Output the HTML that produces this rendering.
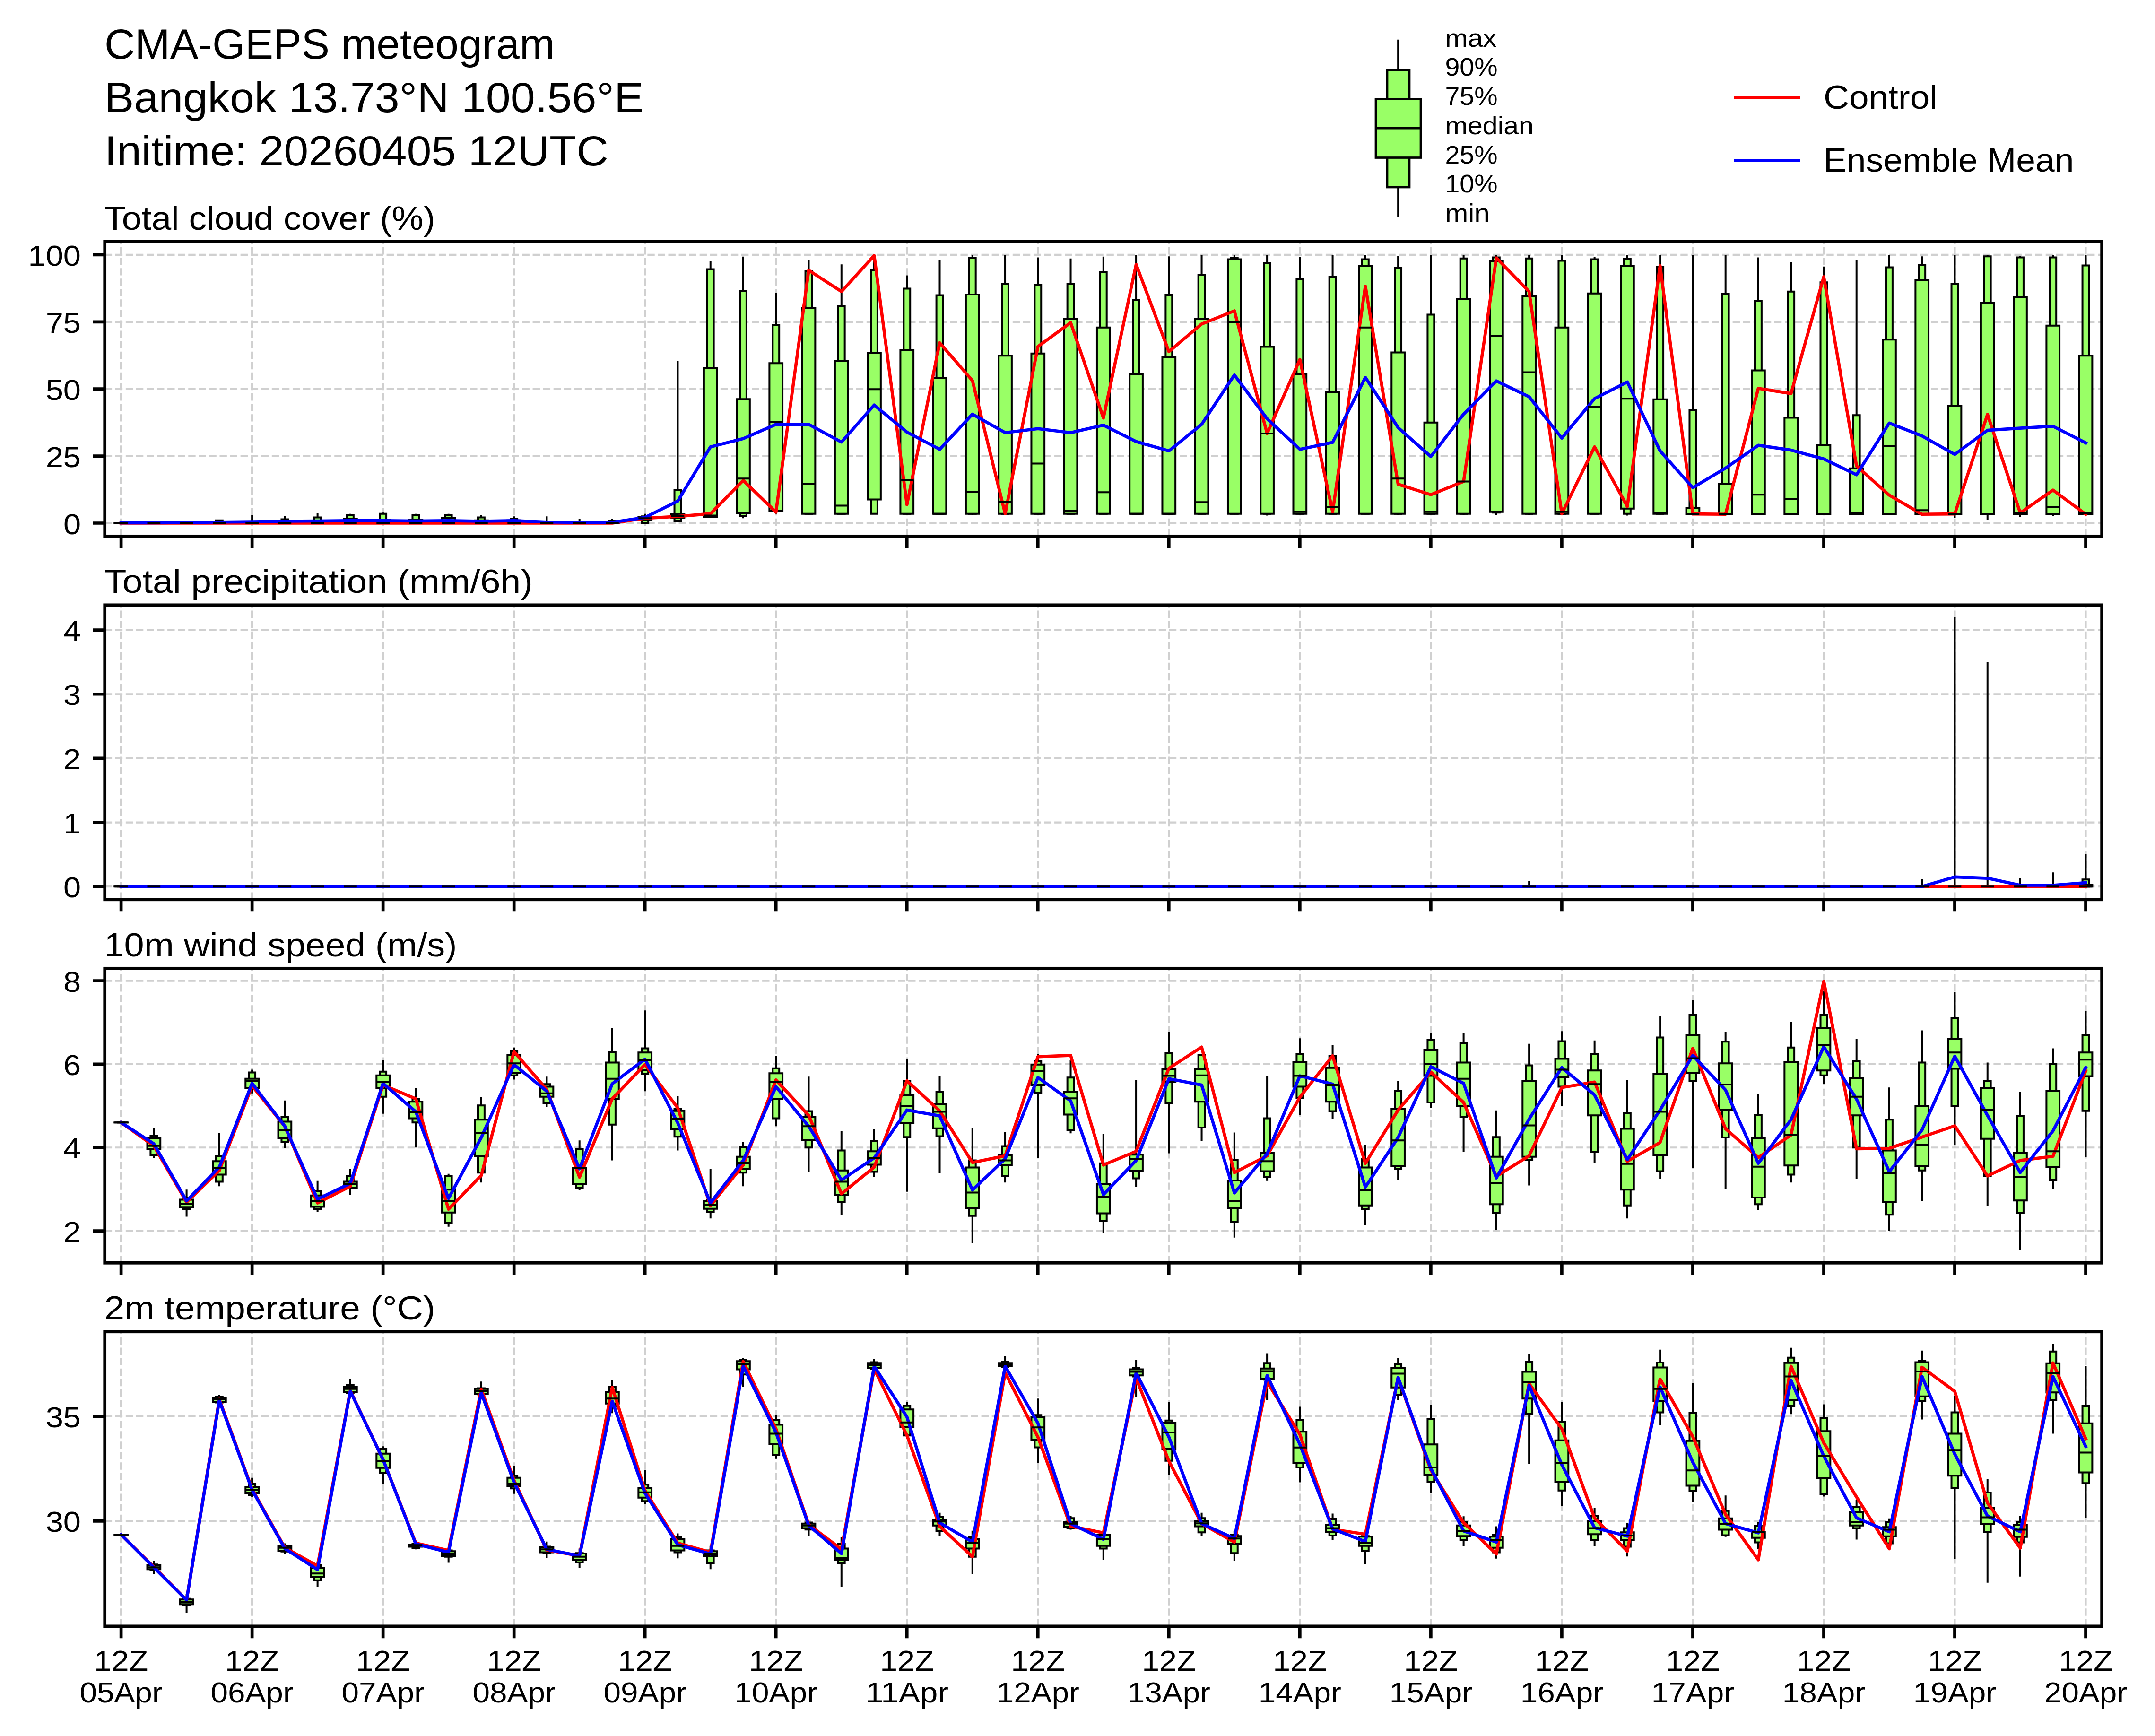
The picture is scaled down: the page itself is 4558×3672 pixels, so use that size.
<!DOCTYPE html><html><head><meta charset="utf-8"><title>CMA-GEPS meteogram</title><style>html,body{margin:0;padding:0;background:#fff;}svg{display:block;}</style></head><body>
<svg width="4558" height="3672" viewBox="0 0 4558 3672" font-family='"Liberation Sans", sans-serif' fill="#000">
<rect x="0" y="0" width="4558" height="3672" fill="#fff"/>
<text x="220.9" y="123.9" font-size="88.33" textLength="952.5" lengthAdjust="spacingAndGlyphs">CMA-GEPS meteogram</text>
<text x="220.9" y="236.7" font-size="88.33" textLength="1140.5" lengthAdjust="spacingAndGlyphs">Bangkok 13.73°N 100.56°E</text>
<text x="220.9" y="349.5" font-size="88.33" textLength="1065.8" lengthAdjust="spacingAndGlyphs">Initime: 20260405 12UTC</text>
<path d="M256.10 1134.30V511.30M533.13 1134.30V511.30M810.15 1134.30V511.30M1087.18 1134.30V511.30M1364.21 1134.30V511.30M1641.23 1134.30V511.30M1918.26 1134.30V511.30M2195.29 1134.30V511.30M2472.31 1134.30V511.30M2749.34 1134.30V511.30M3026.37 1134.30V511.30M3303.39 1134.30V511.30M3580.42 1134.30V511.30M3857.45 1134.30V511.30M4134.47 1134.30V511.30M4411.50 1134.30V511.30M221.70 1106.50H4445.60M221.70 964.60H4445.60M221.70 822.70H4445.60M221.70 680.80H4445.60M221.70 538.90H4445.60" stroke="#d0d0d0" stroke-width="4.17" stroke-dasharray="15.4 6.67" fill="none"/>
<path d="M463.87 1106.50V1099.12M533.13 1106.50V1088.90M602.38 1106.50V1091.17M671.64 1106.50V1085.50M740.90 1106.50V1086.63M810.15 1106.50V1084.36M879.41 1106.50V1086.63M948.67 1106.50V1086.63M1017.92 1106.50V1088.90M1087.18 1106.50V1092.31M1156.44 1106.50V1092.31M1225.69 1106.50V1097.42M1294.95 1106.50V1097.99M1364.21 1106.50V1086.63M1433.46 1104.80V763.67M1502.72 1094.58V551.95M1571.98 1096.28V542.87M1641.23 1086.63V620.07M1710.49 1088.34V549.68M1779.75 1088.34V559.33M1849.00 1087.77V538.90M1918.26 1088.34V582.61M1987.52 1088.34V550.82M2056.77 1089.47V538.90M2126.03 1088.34V538.90M2195.29 1088.34V544.58M2264.54 1088.34V546.85M2333.80 1088.34V542.87M2403.06 1088.34V538.90M2472.31 1088.34V542.31M2541.57 1088.34V538.90M2610.83 1088.34V538.90M2680.08 1090.61V538.90M2749.34 1088.34V543.44M2818.60 1088.34V540.04M2887.85 1088.34V538.90M2957.11 1089.47V541.74M3026.37 1088.34V538.90M3095.62 1089.47V538.90M3164.88 1089.47V538.90M3234.14 1089.47V539.47M3303.39 1088.34V538.90M3372.65 1088.34V543.44M3441.91 1090.61V538.90M3511.16 1088.34V538.90M3580.42 1087.77V538.90M3649.68 1087.77V540.04M3718.93 1087.77V544.58M3788.19 1089.47V554.23M3857.45 1087.77V563.87M3926.70 1087.77V550.82M3995.96 1087.77V538.90M4065.22 1087.77V542.31M4134.47 1095.72V538.90M4203.73 1099.12V538.90M4272.99 1093.45V541.17M4342.24 1091.17V538.90M4411.50 1087.77V538.90" stroke="#000" stroke-width="4.0" fill="none"/>
<g fill="#99ff66" stroke="#000" stroke-width="4.0" stroke-linejoin="miter"><path d="M249.17 1106.50h13.85" stroke-linecap="square"/><path d="M242.25 1106.50h27.70" stroke-linecap="square"/><path d="M318.43 1106.50h13.85" stroke-linecap="square"/><path d="M311.51 1106.50h27.70" stroke-linecap="square"/><path d="M387.69 1106.50h13.85" stroke-linecap="square"/><path d="M380.76 1106.50h27.70" stroke-linecap="square"/><path d="M456.94 1100.82h13.85v5.68h-13.85Z"/><path d="M450.02 1105.36h27.70v1.14h-27.70Z"/><path d="M526.20 1103.66h13.85v2.84h-13.85Z"/><path d="M519.28 1105.36h27.70v1.14h-27.70Z"/><path d="M595.46 1098.55h13.85v7.95h-13.85Z"/><path d="M588.53 1104.80h27.70v1.70h-27.70Z"/><path d="M664.71 1094.58h13.85v11.92h-13.85Z"/><path d="M657.79 1104.80h27.70v1.70h-27.70Z"/><path d="M733.97 1088.90h13.85v17.60h-13.85Z"/><path d="M727.05 1097.99h27.70v8.51h-27.70Z"/><path d="M803.23 1086.63h13.85v19.87h-13.85Z"/><path d="M796.30 1099.69h27.70v6.81h-27.70Z"/><path d="M872.48 1088.90h13.85v17.60h-13.85Z"/><path d="M865.56 1099.69h27.70v6.81h-27.70Z"/><path d="M941.74 1088.90h13.85v17.60h-13.85Z"/><path d="M934.82 1095.72h27.70v10.78h-27.70Z"/><path d="M1011.00 1094.58h13.85v11.92h-13.85Z"/><path d="M1004.07 1100.82h27.70v5.68h-27.70Z"/><path d="M1080.25 1097.42h13.85v9.08h-13.85Z"/><path d="M1073.33 1100.82h27.70v5.68h-27.70Z"/><path d="M1149.51 1103.66h13.85v2.84h-13.85Z"/><path d="M1142.59 1104.80h27.70v1.70h-27.70Z"/><path d="M1218.77 1105.36h13.85v1.14h-13.85Z"/><path d="M1211.84 1106.50h27.70" stroke-linecap="square"/><path d="M1288.02 1101.96h13.85v4.54h-13.85Z"/><path d="M1281.10 1104.80h27.70v1.70h-27.70Z"/><path d="M1357.28 1092.31h13.85v14.19h-13.85Z"/><path d="M1350.36 1094.01h27.70v6.24h-27.70Z"/><path d="M1426.54 1036.12h13.85v65.84h-13.85Z"/><path d="M1419.61 1087.77h27.70v7.95h-27.70Z"/><path d="M1495.79 569.55h13.85v523.89h-13.85Z"/><path d="M1488.87 778.99h27.70v314.45h-27.70Z"/><path d="M1565.05 615.53h13.85v476.22h-13.85Z"/><path d="M1558.13 844.27h27.70v240.66h-27.70Z"/><path d="M1634.31 687.04h13.85v393.91h-13.85Z"/><path d="M1627.38 768.21h27.70v312.75h-27.70Z"/><path d="M1703.56 572.96h13.85v513.68h-13.85Z"/><path d="M1696.64 651.85h27.70v434.78h-27.70Z"/><path d="M1772.82 647.31h13.85v439.32h-13.85Z"/><path d="M1765.90 763.67h27.70v322.96h-27.70Z"/><path d="M1842.08 571.25h13.85v515.38h-13.85Z"/><path d="M1835.15 746.64h27.70v309.91h-27.70Z"/><path d="M1911.33 610.42h13.85v476.22h-13.85Z"/><path d="M1904.41 740.97h27.70v345.67h-27.70Z"/><path d="M1980.59 624.61h13.85v462.03h-13.85Z"/><path d="M1973.67 800.00h27.70v286.64h-27.70Z"/><path d="M2049.85 545.71h13.85v540.92h-13.85Z"/><path d="M2042.92 622.90h27.70v463.73h-27.70Z"/><path d="M2119.10 600.77h13.85v485.87h-13.85Z"/><path d="M2112.18 752.32h27.70v334.32h-27.70Z"/><path d="M2188.36 603.04h13.85v483.60h-13.85Z"/><path d="M2181.44 747.78h27.70v338.86h-27.70Z"/><path d="M2257.62 600.77h13.85v485.87h-13.85Z"/><path d="M2250.69 675.12h27.70v411.51h-27.70Z"/><path d="M2326.87 575.79h13.85v510.84h-13.85Z"/><path d="M2319.95 692.72h27.70v393.91h-27.70Z"/><path d="M2396.13 634.26h13.85v452.38h-13.85Z"/><path d="M2389.21 792.05h27.70v294.58h-27.70Z"/><path d="M2465.39 624.04h13.85v462.59h-13.85Z"/><path d="M2458.46 755.72h27.70v330.91h-27.70Z"/><path d="M2534.64 582.04h13.85v504.60h-13.85Z"/><path d="M2527.72 673.99h27.70v412.65h-27.70Z"/><path d="M2603.90 545.71h13.85v540.92h-13.85Z"/><path d="M2596.98 548.55h27.70v538.08h-27.70Z"/><path d="M2673.16 556.50h13.85v530.14h-13.85Z"/><path d="M2666.23 733.59h27.70v353.05h-27.70Z"/><path d="M2742.41 590.55h13.85v496.08h-13.85Z"/><path d="M2735.49 792.05h27.70v294.58h-27.70Z"/><path d="M2811.67 585.44h13.85v501.19h-13.85Z"/><path d="M2804.75 829.51h27.70v257.12h-27.70Z"/><path d="M2880.93 548.55h13.85v538.08h-13.85Z"/><path d="M2874.00 562.17h27.70v524.46h-27.70Z"/><path d="M2950.18 566.71h13.85v519.92h-13.85Z"/><path d="M2943.26 745.51h27.70v341.13h-27.70Z"/><path d="M3019.44 665.47h13.85v421.16h-13.85Z"/><path d="M3012.52 893.65h27.70v192.98h-27.70Z"/><path d="M3088.70 546.85h13.85v539.79h-13.85Z"/><path d="M3081.77 632.55h27.70v454.08h-27.70Z"/><path d="M3157.95 544.58h13.85v539.79h-13.85Z"/><path d="M3151.03 552.52h27.70v530.14h-27.70Z"/><path d="M3227.21 546.85h13.85v539.79h-13.85Z"/><path d="M3220.29 626.88h27.70v459.76h-27.70Z"/><path d="M3296.47 551.39h13.85v535.25h-13.85Z"/><path d="M3289.54 692.72h27.70v393.91h-27.70Z"/><path d="M3365.72 548.55h13.85v538.08h-13.85Z"/><path d="M3358.80 620.63h27.70v466.00h-27.70Z"/><path d="M3434.98 547.41h13.85v539.22h-13.85Z"/><path d="M3428.06 562.17h27.70v513.68h-27.70Z"/><path d="M3504.24 564.44h13.85v522.19h-13.85Z"/><path d="M3497.31 844.84h27.70v241.80h-27.70Z"/><path d="M3573.49 867.54h13.85v219.66h-13.85Z"/><path d="M3566.57 1074.15h27.70v13.05h-27.70Z"/><path d="M3642.75 621.77h13.85v465.43h-13.85Z"/><path d="M3635.83 1023.06h27.70v64.14h-27.70Z"/><path d="M3712.01 637.09h13.85v450.11h-13.85Z"/><path d="M3705.08 783.54h27.70v303.67h-27.70Z"/><path d="M3781.26 616.66h13.85v470.54h-13.85Z"/><path d="M3774.34 883.43h27.70v203.77h-27.70Z"/><path d="M3850.52 597.36h13.85v489.84h-13.85Z"/><path d="M3843.60 941.90h27.70v145.31h-27.70Z"/><path d="M3919.78 878.32h13.85v208.88h-13.85Z"/><path d="M3912.85 990.71h27.70v96.49h-27.70Z"/><path d="M3989.03 565.58h13.85v521.62h-13.85Z"/><path d="M3982.11 718.26h27.70v368.94h-27.70Z"/><path d="M4058.29 559.90h13.85v527.30h-13.85Z"/><path d="M4051.37 592.82h27.70v494.38h-27.70Z"/><path d="M4127.55 600.20h13.85v487.57h-13.85Z"/><path d="M4120.62 859.03h27.70v228.74h-27.70Z"/><path d="M4196.80 542.31h13.85v544.90h-13.85Z"/><path d="M4189.88 641.07h27.70v446.13h-27.70Z"/><path d="M4266.06 544.58h13.85v542.63h-13.85Z"/><path d="M4259.14 628.01h27.70v459.19h-27.70Z"/><path d="M4335.32 544.58h13.85v542.63h-13.85Z"/><path d="M4328.39 688.75h27.70v398.46h-27.70Z"/><path d="M4404.57 561.60h13.85v525.60h-13.85Z"/><path d="M4397.65 752.32h27.70v334.88h-27.70Z"/></g>
<polyline points="256.10,1106.50 325.36,1106.50 394.61,1106.50 463.87,1106.50 533.13,1106.50 602.38,1106.50 671.64,1106.50 740.90,1106.50 810.15,1106.50 879.41,1106.50 948.67,1106.50 1017.92,1106.50 1087.18,1106.50 1156.44,1106.50 1225.69,1106.50 1294.95,1106.50 1364.21,1096.28 1433.46,1092.31 1502.72,1086.63 1571.98,1016.25 1641.23,1083.23 1710.49,571.82 1779.75,616.66 1849.00,540.60 1918.26,1067.34 1987.52,725.07 2056.77,805.10 2126.03,1086.63 2195.29,733.02 2264.54,682.50 2333.80,884.00 2403.06,559.33 2472.31,743.80 2541.57,685.34 2610.83,657.53 2680.08,916.92 2749.34,760.26 2818.60,1082.66 2887.85,605.31 2957.11,1024.20 3026.37,1046.33 3095.62,1018.52 3164.88,545.71 3234.14,616.66 3303.39,1086.63 3372.65,945.30 3441.91,1071.31 3511.16,562.17 3580.42,1087.20 3649.68,1087.77 3718.93,821.56 3788.19,832.35 3857.45,585.44 3926.70,985.60 3995.96,1047.47 4065.22,1087.77 4134.47,1087.20 4203.73,876.62 4272.99,1084.93 4342.24,1036.69 4411.50,1087.77" fill="none" stroke="#ff0000" stroke-width="6.67" stroke-linejoin="round" stroke-linecap="square"/>
<polyline points="256.10,1105.93 325.36,1105.93 394.61,1105.36 463.87,1104.23 533.13,1103.66 602.38,1102.53 671.64,1101.96 740.90,1101.39 810.15,1101.39 879.41,1101.96 948.67,1101.39 1017.92,1102.53 1087.18,1101.39 1156.44,1104.23 1225.69,1104.80 1294.95,1104.80 1364.21,1094.58 1433.46,1059.96 1502.72,945.30 1571.98,927.71 1641.23,897.62 1710.49,897.62 1779.75,935.08 1849.00,856.76 1918.26,914.08 1987.52,950.41 2056.77,876.05 2126.03,915.22 2195.29,906.70 2264.54,915.22 2333.80,899.33 2403.06,933.95 2472.31,953.82 2541.57,897.62 2610.83,793.18 2680.08,885.70 2749.34,950.41 2818.60,935.65 2887.85,798.29 2957.11,904.43 3026.37,965.74 3095.62,876.05 3164.88,805.67 3234.14,839.16 3303.39,926.57 3372.65,843.13 3441.91,807.94 3511.16,953.82 3580.42,1031.58 3649.68,990.14 3718.93,941.90 3788.19,952.11 3857.45,970.84 3926.70,1004.33 3995.96,894.79 4065.22,922.03 4134.47,961.19 4203.73,910.11 4272.99,905.57 4342.24,901.60 4411.50,936.79" fill="none" stroke="#0000ff" stroke-width="6.67" stroke-linejoin="round" stroke-linecap="square"/>
<path d="M242.25 1106.50H269.95M311.51 1106.50H339.21M380.76 1106.50H408.46M450.02 1106.50H477.72M519.28 1106.50H546.98M588.53 1106.50H616.23M657.79 1106.50H685.49M727.05 1106.50H754.75M796.30 1106.50H824.00M865.56 1106.50H893.26M934.82 1106.50H962.52M1004.07 1106.50H1031.77M1073.33 1106.50H1101.03M1142.59 1106.50H1170.29M1211.84 1106.50H1239.54M1281.10 1106.50H1308.80M1350.36 1096.28H1378.06M1419.61 1091.74H1447.31M1488.87 1090.61H1516.57M1558.13 1012.28H1585.83M1627.38 893.08H1655.08M1696.64 1023.63H1724.34M1765.90 1069.61H1793.60M1835.15 823.27H1862.85M1904.41 1015.68H1932.11M1973.67 1086.63H2001.37M2042.92 1040.09H2070.62M2112.18 1061.09H2139.88M2181.44 980.49H2209.14M2250.69 1080.96H2278.39M2319.95 1041.23H2347.65M2389.21 1086.63H2416.91M2458.46 1086.63H2486.16M2527.72 1062.23H2555.42M2596.98 681.37H2624.68M2666.23 916.92H2693.93M2735.49 1082.66H2763.19M2804.75 1071.88H2832.45M2874.00 692.72H2901.70M2943.26 1012.28H2970.96M3012.52 1082.66H3040.22M3081.77 1018.52H3109.47M3151.03 710.32H3178.73M3220.29 787.51H3247.99M3289.54 1082.66H3317.24M3358.80 860.73H3386.50M3428.06 843.13H3455.76M3497.31 1084.93H3525.01M3566.57 1087.20H3594.27M3635.83 1087.20H3663.53M3705.08 1046.33H3732.78M3774.34 1055.98H3802.04M3843.60 1087.20H3871.30M3912.85 1086.07H3940.55M3982.11 943.60H4009.81M4051.37 1079.26H4079.07M4120.62 1087.77H4148.32M4189.88 1087.20H4217.58M4259.14 1084.93H4286.84M4328.39 1071.88H4356.09M4397.65 1086.07H4425.35" stroke="#000" stroke-width="4.0" fill="none"/>
<rect x="221.70" y="511.30" width="4223.90" height="623.00" fill="none" stroke="#000" stroke-width="6.67" stroke-linejoin="miter"/>
<path d="M221.70 1106.50H196.20M221.70 964.60H196.20M221.70 822.70H196.20M221.70 680.80H196.20M221.70 538.90H196.20M256.10 1134.30V1159.80M533.13 1134.30V1159.80M810.15 1134.30V1159.80M1087.18 1134.30V1159.80M1364.21 1134.30V1159.80M1641.23 1134.30V1159.80M1918.26 1134.30V1159.80M2195.29 1134.30V1159.80M2472.31 1134.30V1159.80M2749.34 1134.30V1159.80M3026.37 1134.30V1159.80M3303.39 1134.30V1159.80M3580.42 1134.30V1159.80M3857.45 1134.30V1159.80M4134.47 1134.30V1159.80M4411.50 1134.30V1159.80" stroke="#000" stroke-width="6.67" fill="none"/>
<text x="171.0" y="1129.5" font-size="61.83" text-anchor="end" textLength="37.1" lengthAdjust="spacingAndGlyphs">0</text>
<text x="171.0" y="987.6" font-size="61.83" text-anchor="end" textLength="74.3" lengthAdjust="spacingAndGlyphs">25</text>
<text x="171.0" y="845.7" font-size="61.83" text-anchor="end" textLength="74.3" lengthAdjust="spacingAndGlyphs">50</text>
<text x="171.0" y="703.8" font-size="61.83" text-anchor="end" textLength="74.3" lengthAdjust="spacingAndGlyphs">75</text>
<text x="171.0" y="561.9" font-size="61.83" text-anchor="end" textLength="111.4" lengthAdjust="spacingAndGlyphs">100</text>
<text x="220.4" y="485.7" font-size="70.67" textLength="700.0" lengthAdjust="spacingAndGlyphs">Total cloud cover (%)</text>
<path d="M256.10 1902.80V1279.80M533.13 1902.80V1279.80M810.15 1902.80V1279.80M1087.18 1902.80V1279.80M1364.21 1902.80V1279.80M1641.23 1902.80V1279.80M1918.26 1902.80V1279.80M2195.29 1902.80V1279.80M2472.31 1902.80V1279.80M2749.34 1902.80V1279.80M3026.37 1902.80V1279.80M3303.39 1902.80V1279.80M3580.42 1902.80V1279.80M3857.45 1902.80V1279.80M4134.47 1902.80V1279.80M4411.50 1902.80V1279.80M221.70 1875.20H4445.60M221.70 1739.55H4445.60M221.70 1603.90H4445.60M221.70 1468.25H4445.60M221.70 1332.60H4445.60" stroke="#d0d0d0" stroke-width="4.17" stroke-dasharray="15.4 6.67" fill="none"/>
<path d="M3234.14 1875.20V1863.53M4065.22 1875.20V1859.46M4134.47 1875.20V1305.47M4203.73 1875.20V1400.42M4272.99 1875.20V1857.57M4342.24 1875.20V1845.36M4411.50 1875.20V1806.02" stroke="#000" stroke-width="4.0" fill="none"/>
<g fill="#99ff66" stroke="#000" stroke-width="4.0" stroke-linejoin="miter"><path d="M249.17 1875.20h13.85" stroke-linecap="square"/><path d="M242.25 1875.20h27.70" stroke-linecap="square"/><path d="M318.43 1875.20h13.85" stroke-linecap="square"/><path d="M311.51 1875.20h27.70" stroke-linecap="square"/><path d="M387.69 1875.20h13.85" stroke-linecap="square"/><path d="M380.76 1875.20h27.70" stroke-linecap="square"/><path d="M456.94 1875.20h13.85" stroke-linecap="square"/><path d="M450.02 1875.20h27.70" stroke-linecap="square"/><path d="M526.20 1875.20h13.85" stroke-linecap="square"/><path d="M519.28 1875.20h27.70" stroke-linecap="square"/><path d="M595.46 1875.20h13.85" stroke-linecap="square"/><path d="M588.53 1875.20h27.70" stroke-linecap="square"/><path d="M664.71 1875.20h13.85" stroke-linecap="square"/><path d="M657.79 1875.20h27.70" stroke-linecap="square"/><path d="M733.97 1875.20h13.85" stroke-linecap="square"/><path d="M727.05 1875.20h27.70" stroke-linecap="square"/><path d="M803.23 1875.20h13.85" stroke-linecap="square"/><path d="M796.30 1875.20h27.70" stroke-linecap="square"/><path d="M872.48 1875.20h13.85" stroke-linecap="square"/><path d="M865.56 1875.20h27.70" stroke-linecap="square"/><path d="M941.74 1875.20h13.85" stroke-linecap="square"/><path d="M934.82 1875.20h27.70" stroke-linecap="square"/><path d="M1011.00 1875.20h13.85" stroke-linecap="square"/><path d="M1004.07 1875.20h27.70" stroke-linecap="square"/><path d="M1080.25 1875.20h13.85" stroke-linecap="square"/><path d="M1073.33 1875.20h27.70" stroke-linecap="square"/><path d="M1149.51 1875.20h13.85" stroke-linecap="square"/><path d="M1142.59 1875.20h27.70" stroke-linecap="square"/><path d="M1218.77 1875.20h13.85" stroke-linecap="square"/><path d="M1211.84 1875.20h27.70" stroke-linecap="square"/><path d="M1288.02 1875.20h13.85" stroke-linecap="square"/><path d="M1281.10 1875.20h27.70" stroke-linecap="square"/><path d="M1357.28 1875.20h13.85" stroke-linecap="square"/><path d="M1350.36 1875.20h27.70" stroke-linecap="square"/><path d="M1426.54 1875.20h13.85" stroke-linecap="square"/><path d="M1419.61 1875.20h27.70" stroke-linecap="square"/><path d="M1495.79 1875.20h13.85" stroke-linecap="square"/><path d="M1488.87 1875.20h27.70" stroke-linecap="square"/><path d="M1565.05 1875.20h13.85" stroke-linecap="square"/><path d="M1558.13 1875.20h27.70" stroke-linecap="square"/><path d="M1634.31 1875.20h13.85" stroke-linecap="square"/><path d="M1627.38 1875.20h27.70" stroke-linecap="square"/><path d="M1703.56 1875.20h13.85" stroke-linecap="square"/><path d="M1696.64 1875.20h27.70" stroke-linecap="square"/><path d="M1772.82 1875.20h13.85" stroke-linecap="square"/><path d="M1765.90 1875.20h27.70" stroke-linecap="square"/><path d="M1842.08 1875.20h13.85" stroke-linecap="square"/><path d="M1835.15 1875.20h27.70" stroke-linecap="square"/><path d="M1911.33 1875.20h13.85" stroke-linecap="square"/><path d="M1904.41 1875.20h27.70" stroke-linecap="square"/><path d="M1980.59 1875.20h13.85" stroke-linecap="square"/><path d="M1973.67 1875.20h27.70" stroke-linecap="square"/><path d="M2049.85 1875.20h13.85" stroke-linecap="square"/><path d="M2042.92 1875.20h27.70" stroke-linecap="square"/><path d="M2119.10 1875.20h13.85" stroke-linecap="square"/><path d="M2112.18 1875.20h27.70" stroke-linecap="square"/><path d="M2188.36 1875.20h13.85" stroke-linecap="square"/><path d="M2181.44 1875.20h27.70" stroke-linecap="square"/><path d="M2257.62 1875.20h13.85" stroke-linecap="square"/><path d="M2250.69 1875.20h27.70" stroke-linecap="square"/><path d="M2326.87 1875.20h13.85" stroke-linecap="square"/><path d="M2319.95 1875.20h27.70" stroke-linecap="square"/><path d="M2396.13 1875.20h13.85" stroke-linecap="square"/><path d="M2389.21 1875.20h27.70" stroke-linecap="square"/><path d="M2465.39 1875.20h13.85" stroke-linecap="square"/><path d="M2458.46 1875.20h27.70" stroke-linecap="square"/><path d="M2534.64 1875.20h13.85" stroke-linecap="square"/><path d="M2527.72 1875.20h27.70" stroke-linecap="square"/><path d="M2603.90 1875.20h13.85" stroke-linecap="square"/><path d="M2596.98 1875.20h27.70" stroke-linecap="square"/><path d="M2673.16 1875.20h13.85" stroke-linecap="square"/><path d="M2666.23 1875.20h27.70" stroke-linecap="square"/><path d="M2742.41 1875.20h13.85" stroke-linecap="square"/><path d="M2735.49 1875.20h27.70" stroke-linecap="square"/><path d="M2811.67 1875.20h13.85" stroke-linecap="square"/><path d="M2804.75 1875.20h27.70" stroke-linecap="square"/><path d="M2880.93 1875.20h13.85" stroke-linecap="square"/><path d="M2874.00 1875.20h27.70" stroke-linecap="square"/><path d="M2950.18 1875.20h13.85" stroke-linecap="square"/><path d="M2943.26 1875.20h27.70" stroke-linecap="square"/><path d="M3019.44 1875.20h13.85" stroke-linecap="square"/><path d="M3012.52 1875.20h27.70" stroke-linecap="square"/><path d="M3088.70 1875.20h13.85" stroke-linecap="square"/><path d="M3081.77 1875.20h27.70" stroke-linecap="square"/><path d="M3157.95 1875.20h13.85" stroke-linecap="square"/><path d="M3151.03 1875.20h27.70" stroke-linecap="square"/><path d="M3227.21 1875.20h13.85" stroke-linecap="square"/><path d="M3220.29 1875.20h27.70" stroke-linecap="square"/><path d="M3296.47 1875.20h13.85" stroke-linecap="square"/><path d="M3289.54 1875.20h27.70" stroke-linecap="square"/><path d="M3365.72 1875.20h13.85" stroke-linecap="square"/><path d="M3358.80 1875.20h27.70" stroke-linecap="square"/><path d="M3434.98 1875.20h13.85" stroke-linecap="square"/><path d="M3428.06 1875.20h27.70" stroke-linecap="square"/><path d="M3504.24 1875.20h13.85" stroke-linecap="square"/><path d="M3497.31 1875.20h27.70" stroke-linecap="square"/><path d="M3573.49 1875.20h13.85" stroke-linecap="square"/><path d="M3566.57 1875.20h27.70" stroke-linecap="square"/><path d="M3642.75 1875.20h13.85" stroke-linecap="square"/><path d="M3635.83 1875.20h27.70" stroke-linecap="square"/><path d="M3712.01 1875.20h13.85" stroke-linecap="square"/><path d="M3705.08 1875.20h27.70" stroke-linecap="square"/><path d="M3781.26 1875.20h13.85" stroke-linecap="square"/><path d="M3774.34 1875.20h27.70" stroke-linecap="square"/><path d="M3850.52 1875.20h13.85" stroke-linecap="square"/><path d="M3843.60 1875.20h27.70" stroke-linecap="square"/><path d="M3919.78 1875.20h13.85" stroke-linecap="square"/><path d="M3912.85 1875.20h27.70" stroke-linecap="square"/><path d="M3989.03 1875.20h13.85" stroke-linecap="square"/><path d="M3982.11 1875.20h27.70" stroke-linecap="square"/><path d="M4058.29 1875.20h13.85" stroke-linecap="square"/><path d="M4051.37 1875.20h27.70" stroke-linecap="square"/><path d="M4127.55 1875.20h13.85" stroke-linecap="square"/><path d="M4120.62 1875.20h27.70" stroke-linecap="square"/><path d="M4196.80 1875.20h13.85" stroke-linecap="square"/><path d="M4189.88 1875.20h27.70" stroke-linecap="square"/><path d="M4266.06 1875.20h13.85" stroke-linecap="square"/><path d="M4259.14 1875.20h27.70" stroke-linecap="square"/><path d="M4335.32 1875.20h13.85" stroke-linecap="square"/><path d="M4328.39 1875.20h27.70" stroke-linecap="square"/><path d="M4404.57 1860.28h13.85v14.92h-13.85Z"/><path d="M4397.65 1871.13h27.70v4.07h-27.70Z"/></g>
<polyline points="256.10,1875.20 325.36,1875.20 394.61,1875.20 463.87,1875.20 533.13,1875.20 602.38,1875.20 671.64,1875.20 740.90,1875.20 810.15,1875.20 879.41,1875.20 948.67,1875.20 1017.92,1875.20 1087.18,1875.20 1156.44,1875.20 1225.69,1875.20 1294.95,1875.20 1364.21,1875.20 1433.46,1875.20 1502.72,1875.20 1571.98,1875.20 1641.23,1875.20 1710.49,1875.20 1779.75,1875.20 1849.00,1875.20 1918.26,1875.20 1987.52,1875.20 2056.77,1875.20 2126.03,1875.20 2195.29,1875.20 2264.54,1875.20 2333.80,1875.20 2403.06,1875.20 2472.31,1875.20 2541.57,1875.20 2610.83,1875.20 2680.08,1875.20 2749.34,1875.20 2818.60,1875.20 2887.85,1875.20 2957.11,1875.20 3026.37,1875.20 3095.62,1875.20 3164.88,1875.20 3234.14,1875.20 3303.39,1875.20 3372.65,1875.20 3441.91,1875.20 3511.16,1875.20 3580.42,1875.20 3649.68,1875.20 3718.93,1875.20 3788.19,1875.20 3857.45,1875.20 3926.70,1875.20 3995.96,1875.20 4065.22,1875.20 4134.47,1875.20 4203.73,1875.20 4272.99,1875.20 4342.24,1875.20 4411.50,1875.20" fill="none" stroke="#ff0000" stroke-width="6.67" stroke-linejoin="round" stroke-linecap="square"/>
<polyline points="256.10,1875.20 325.36,1875.20 394.61,1875.20 463.87,1875.20 533.13,1875.20 602.38,1875.20 671.64,1875.20 740.90,1875.20 810.15,1875.20 879.41,1875.20 948.67,1875.20 1017.92,1875.20 1087.18,1875.20 1156.44,1875.20 1225.69,1875.20 1294.95,1875.20 1364.21,1875.20 1433.46,1875.20 1502.72,1875.20 1571.98,1875.20 1641.23,1875.20 1710.49,1875.20 1779.75,1875.20 1849.00,1875.20 1918.26,1875.20 1987.52,1875.20 2056.77,1875.20 2126.03,1875.20 2195.29,1875.20 2264.54,1875.20 2333.80,1875.20 2403.06,1875.20 2472.31,1875.20 2541.57,1875.20 2610.83,1875.20 2680.08,1875.20 2749.34,1875.20 2818.60,1875.20 2887.85,1875.20 2957.11,1875.20 3026.37,1875.20 3095.62,1875.20 3164.88,1875.20 3234.14,1875.20 3303.39,1875.20 3372.65,1875.20 3441.91,1875.20 3511.16,1875.20 3580.42,1875.20 3649.68,1875.20 3718.93,1875.20 3788.19,1875.20 3857.45,1875.20 3926.70,1875.20 3995.96,1875.20 4065.22,1875.20 4134.47,1854.85 4203.73,1857.57 4272.99,1872.49 4342.24,1872.49 4411.50,1867.06" fill="none" stroke="#0000ff" stroke-width="6.67" stroke-linejoin="round" stroke-linecap="square"/>
<path d="M242.25 1875.20H269.95M311.51 1875.20H339.21M380.76 1875.20H408.46M450.02 1875.20H477.72M519.28 1875.20H546.98M588.53 1875.20H616.23M657.79 1875.20H685.49M727.05 1875.20H754.75M796.30 1875.20H824.00M865.56 1875.20H893.26M934.82 1875.20H962.52M1004.07 1875.20H1031.77M1073.33 1875.20H1101.03M1142.59 1875.20H1170.29M1211.84 1875.20H1239.54M1281.10 1875.20H1308.80M1350.36 1875.20H1378.06M1419.61 1875.20H1447.31M1488.87 1875.20H1516.57M1558.13 1875.20H1585.83M1627.38 1875.20H1655.08M1696.64 1875.20H1724.34M1765.90 1875.20H1793.60M1835.15 1875.20H1862.85M1904.41 1875.20H1932.11M1973.67 1875.20H2001.37M2042.92 1875.20H2070.62M2112.18 1875.20H2139.88M2181.44 1875.20H2209.14M2250.69 1875.20H2278.39M2319.95 1875.20H2347.65M2389.21 1875.20H2416.91M2458.46 1875.20H2486.16M2527.72 1875.20H2555.42M2596.98 1875.20H2624.68M2666.23 1875.20H2693.93M2735.49 1875.20H2763.19M2804.75 1875.20H2832.45M2874.00 1875.20H2901.70M2943.26 1875.20H2970.96M3012.52 1875.20H3040.22M3081.77 1875.20H3109.47M3151.03 1875.20H3178.73M3220.29 1875.20H3247.99M3289.54 1875.20H3317.24M3358.80 1875.20H3386.50M3428.06 1875.20H3455.76M3497.31 1875.20H3525.01M3566.57 1875.20H3594.27M3635.83 1875.20H3663.53M3705.08 1875.20H3732.78M3774.34 1875.20H3802.04M3843.60 1875.20H3871.30M3912.85 1875.20H3940.55M3982.11 1875.20H4009.81M4051.37 1875.20H4079.07M4120.62 1875.20H4148.32M4189.88 1875.20H4217.58M4259.14 1875.20H4286.84M4328.39 1875.20H4356.09M4397.65 1875.20H4425.35" stroke="#000" stroke-width="4.0" fill="none"/>
<rect x="221.70" y="1279.80" width="4223.90" height="623.00" fill="none" stroke="#000" stroke-width="6.67" stroke-linejoin="miter"/>
<path d="M221.70 1875.20H196.20M221.70 1739.55H196.20M221.70 1603.90H196.20M221.70 1468.25H196.20M221.70 1332.60H196.20M256.10 1902.80V1928.30M533.13 1902.80V1928.30M810.15 1902.80V1928.30M1087.18 1902.80V1928.30M1364.21 1902.80V1928.30M1641.23 1902.80V1928.30M1918.26 1902.80V1928.30M2195.29 1902.80V1928.30M2472.31 1902.80V1928.30M2749.34 1902.80V1928.30M3026.37 1902.80V1928.30M3303.39 1902.80V1928.30M3580.42 1902.80V1928.30M3857.45 1902.80V1928.30M4134.47 1902.80V1928.30M4411.50 1902.80V1928.30" stroke="#000" stroke-width="6.67" fill="none"/>
<text x="171.0" y="1898.2" font-size="61.83" text-anchor="end" textLength="37.1" lengthAdjust="spacingAndGlyphs">0</text>
<text x="171.0" y="1762.5" font-size="61.83" text-anchor="end" textLength="37.1" lengthAdjust="spacingAndGlyphs">1</text>
<text x="171.0" y="1626.9" font-size="61.83" text-anchor="end" textLength="37.1" lengthAdjust="spacingAndGlyphs">2</text>
<text x="171.0" y="1491.2" font-size="61.83" text-anchor="end" textLength="37.1" lengthAdjust="spacingAndGlyphs">3</text>
<text x="171.0" y="1355.6" font-size="61.83" text-anchor="end" textLength="37.1" lengthAdjust="spacingAndGlyphs">4</text>
<text x="220.4" y="1254.2" font-size="70.67" textLength="906.5" lengthAdjust="spacingAndGlyphs">Total precipitation (mm/6h)</text>
<path d="M256.10 2671.30V2048.30M533.13 2671.30V2048.30M810.15 2671.30V2048.30M1087.18 2671.30V2048.30M1364.21 2671.30V2048.30M1641.23 2671.30V2048.30M1918.26 2671.30V2048.30M2195.29 2671.30V2048.30M2472.31 2671.30V2048.30M2749.34 2671.30V2048.30M3026.37 2671.30V2048.30M3303.39 2671.30V2048.30M3580.42 2671.30V2048.30M3857.45 2671.30V2048.30M4134.47 2671.30V2048.30M4411.50 2671.30V2048.30M221.70 2603.60H4445.60M221.70 2427.26H4445.60M221.70 2250.92H4445.60M221.70 2074.58H4445.60" stroke="#d0d0d0" stroke-width="4.17" stroke-dasharray="15.4 6.67" fill="none"/>
<path d="M325.36 2449.30V2386.70M394.61 2573.62V2516.31M463.87 2509.26V2396.40M533.13 2312.64V2262.38M602.38 2429.02V2327.63M671.64 2563.92V2497.80M740.90 2526.89V2473.11M810.15 2355.84V2242.98M879.41 2427.26V2302.06M948.67 2594.78V2482.81M1017.92 2501.32V2320.57M1087.18 2283.54V2215.65M1156.44 2341.74V2277.37M1225.69 2517.19V2412.27M1294.95 2454.59V2175.09M1364.21 2308.23V2137.18M1433.46 2433.43V2318.81M1502.72 2577.15V2473.11M1571.98 2509.26V2415.80M1641.23 2382.29V2233.29M1710.49 2479.28V2277.37M1779.75 2570.10V2391.99M1849.00 2489.86V2388.47M1918.26 2520.72V2240.34M1987.52 2481.93V2276.49M2056.77 2630.05V2385.82M2126.03 2501.32V2394.64M2195.29 2449.30V2229.76M2264.54 2397.28V2242.10M2333.80 2608.89V2399.05M2403.06 2510.14V2284.42M2472.31 2439.60V2183.03M2541.57 2414.03V2230.64M2610.83 2617.71V2395.52M2680.08 2497.80V2276.49M2749.34 2358.49V2196.25M2818.60 2366.42V2210.36M2887.85 2591.26V2421.97M2957.11 2495.15V2287.07M3026.37 2343.50V2184.79M3095.62 2436.96V2183.91M3164.88 2600.95V2348.79M3234.14 2507.49V2207.72M3303.39 2339.97V2181.27M3372.65 2459.00V2200.66M3441.91 2577.15V2284.42M3511.16 2493.39V2149.52M3580.42 2470.46V2116.02M3649.68 2514.55V2182.15M3718.93 2559.51V2314.40M3788.19 2501.32V2161.87M3857.45 2292.36V2096.62M3926.70 2493.39V2198.02M3995.96 2603.60V2300.30M4065.22 2541.00V2179.50M4134.47 2421.97V2098.39M4203.73 2550.70V2247.39M4272.99 2645.04V2309.11M4342.24 2515.43V2217.42M4411.50 2447.54V2138.94" stroke="#000" stroke-width="4.0" fill="none"/>
<g fill="#99ff66" stroke="#000" stroke-width="4.0" stroke-linejoin="miter"><path d="M249.17 2374.36h13.85" stroke-linecap="square"/><path d="M242.25 2374.36h27.70" stroke-linecap="square"/><path d="M318.43 2402.57h13.85v40.56h-13.85Z"/><path d="M311.51 2406.98h27.70v23.81h-27.70Z"/><path d="M387.69 2533.06h13.85v24.69h-13.85Z"/><path d="M380.76 2537.47h27.70v15.87h-27.70Z"/><path d="M456.94 2444.89h13.85v54.67h-13.85Z"/><path d="M450.02 2456.36h27.70v28.21h-27.70Z"/><path d="M526.20 2268.55h13.85v33.50h-13.85Z"/><path d="M519.28 2281.78h27.70v20.28h-27.70Z"/><path d="M595.46 2362.90h13.85v52.02h-13.85Z"/><path d="M588.53 2372.59h27.70v34.39h-27.70Z"/><path d="M664.71 2519.84h13.85v37.91h-13.85Z"/><path d="M657.79 2528.66h27.70v23.81h-27.70Z"/><path d="M733.97 2488.10h13.85v24.69h-13.85Z"/><path d="M727.05 2499.56h27.70v13.23h-27.70Z"/><path d="M803.23 2266.79h13.85v52.90h-13.85Z"/><path d="M796.30 2274.73h27.70v27.33h-27.70Z"/><path d="M872.48 2324.10h13.85v50.26h-13.85Z"/><path d="M865.56 2330.27h27.70v35.27h-27.70Z"/><path d="M941.74 2488.10h13.85v97.87h-13.85Z"/><path d="M934.82 2516.31h27.70v48.49h-27.70Z"/><path d="M1011.00 2338.21h13.85v141.95h-13.85Z"/><path d="M1004.07 2368.19h27.70v76.71h-27.70Z"/><path d="M1080.25 2223.59h13.85v51.14h-13.85Z"/><path d="M1073.33 2231.52h27.70v37.91h-27.70Z"/><path d="M1149.51 2293.24h13.85v40.56h-13.85Z"/><path d="M1142.59 2298.53h27.70v21.16h-27.70Z"/><path d="M1218.77 2429.91h13.85v82.88h-13.85Z"/><path d="M1211.84 2470.46h27.70v33.50h-27.70Z"/><path d="M1288.02 2225.35h13.85v153.42h-13.85Z"/><path d="M1281.10 2247.39h27.70v77.59h-27.70Z"/><path d="M1357.28 2217.42h13.85v54.67h-13.85Z"/><path d="M1350.36 2226.23h27.70v37.03h-27.70Z"/><path d="M1426.54 2345.26h13.85v59.07h-13.85Z"/><path d="M1419.61 2349.67h27.70v38.79h-27.70Z"/><path d="M1495.79 2538.35h13.85v25.57h-13.85Z"/><path d="M1488.87 2540.12h27.70v16.75h-27.70Z"/><path d="M1565.05 2426.38h13.85v53.78h-13.85Z"/><path d="M1558.13 2446.66h27.70v26.45h-27.70Z"/><path d="M1634.31 2259.74h13.85v105.80h-13.85Z"/><path d="M1627.38 2270.32h27.70v54.67h-27.70Z"/><path d="M1703.56 2350.55h13.85v76.71h-13.85Z"/><path d="M1696.64 2362.90h27.70v48.49h-27.70Z"/><path d="M1772.82 2433.43h13.85v109.33h-13.85Z"/><path d="M1765.90 2475.75h27.70v52.02h-27.70Z"/><path d="M1842.08 2414.03h13.85v64.36h-13.85Z"/><path d="M1835.15 2435.20h27.70v28.21h-27.70Z"/><path d="M1911.33 2286.19h13.85v119.03h-13.85Z"/><path d="M1904.41 2316.17h27.70v59.07h-27.70Z"/><path d="M1980.59 2309.99h13.85v93.46h-13.85Z"/><path d="M1973.67 2335.56h27.70v51.14h-27.70Z"/><path d="M2049.85 2454.59h13.85v117.27h-13.85Z"/><path d="M2042.92 2469.58h27.70v86.41h-27.70Z"/><path d="M2119.10 2424.61h13.85v62.60h-13.85Z"/><path d="M2112.18 2443.13h27.70v21.16h-27.70Z"/><path d="M2188.36 2244.75h13.85v67.01h-13.85Z"/><path d="M2181.44 2251.80h27.70v43.20h-27.70Z"/><path d="M2257.62 2279.13h13.85v111.09h-13.85Z"/><path d="M2250.69 2309.11h27.70v48.49h-27.70Z"/><path d="M2326.87 2460.76h13.85v121.67h-13.85Z"/><path d="M2319.95 2504.85h27.70v61.72h-27.70Z"/><path d="M2396.13 2442.25h13.85v50.26h-13.85Z"/><path d="M2389.21 2442.25h27.70v34.39h-27.70Z"/><path d="M2465.39 2227.11h13.85v106.69h-13.85Z"/><path d="M2458.46 2261.50h27.70v27.33h-27.70Z"/><path d="M2534.64 2231.52h13.85v153.42h-13.85Z"/><path d="M2527.72 2261.50h27.70v68.77h-27.70Z"/><path d="M2603.90 2453.71h13.85v131.37h-13.85Z"/><path d="M2596.98 2496.91h27.70v59.07h-27.70Z"/><path d="M2673.16 2365.54h13.85v124.32h-13.85Z"/><path d="M2666.23 2438.72h27.70v38.79h-27.70Z"/><path d="M2742.41 2229.76h13.85v92.58h-13.85Z"/><path d="M2735.49 2246.51h27.70v52.02h-27.70Z"/><path d="M2811.67 2233.29h13.85v117.27h-13.85Z"/><path d="M2804.75 2258.86h27.70v71.42h-27.70Z"/><path d="M2880.93 2451.07h13.85v106.69h-13.85Z"/><path d="M2874.00 2469.58h27.70v80.23h-27.70Z"/><path d="M2950.18 2307.35h13.85v164.88h-13.85Z"/><path d="M2943.26 2345.26h27.70v120.79h-27.70Z"/><path d="M3019.44 2199.78h13.85v132.26h-13.85Z"/><path d="M3012.52 2220.94h27.70v54.67h-27.70Z"/><path d="M3088.70 2205.95h13.85v156.06h-13.85Z"/><path d="M3081.77 2247.39h27.70v91.70h-27.70Z"/><path d="M3157.95 2405.22h13.85v160.47h-13.85Z"/><path d="M3151.03 2446.66h27.70v100.51h-27.70Z"/><path d="M3227.21 2253.57h13.85v200.15h-13.85Z"/><path d="M3220.29 2286.19h27.70v160.47h-27.70Z"/><path d="M3296.47 2202.43h13.85v96.11h-13.85Z"/><path d="M3289.54 2239.46h27.70v38.79h-27.70Z"/><path d="M3365.72 2228.88h13.85v207.20h-13.85Z"/><path d="M3358.80 2264.15h27.70v95.22h-27.70Z"/><path d="M3434.98 2354.96h13.85v194.86h-13.85Z"/><path d="M3428.06 2387.58h27.70v128.73h-27.70Z"/><path d="M3504.24 2194.49h13.85v283.03h-13.85Z"/><path d="M3497.31 2272.08h27.70v171.93h-27.70Z"/><path d="M3573.49 2146.88h13.85v139.31h-13.85Z"/><path d="M3566.57 2190.08h27.70v79.35h-27.70Z"/><path d="M3642.75 2203.31h13.85v202.79h-13.85Z"/><path d="M3635.83 2249.16h27.70v98.75h-27.70Z"/><path d="M3712.01 2358.49h13.85v188.68h-13.85Z"/><path d="M3705.08 2407.86h27.70v125.20h-27.70Z"/><path d="M3781.26 2215.65h13.85v268.92h-13.85Z"/><path d="M3774.34 2246.51h27.70v218.66h-27.70Z"/><path d="M3850.52 2146.88h13.85v127.85h-13.85Z"/><path d="M3843.60 2175.09h27.70v89.05h-27.70Z"/><path d="M3919.78 2244.75h13.85v182.51h-13.85Z"/><path d="M3912.85 2280.90h27.70v78.47h-27.70Z"/><path d="M3989.03 2368.19h13.85v201.03h-13.85Z"/><path d="M3982.11 2433.43h27.70v108.45h-27.70Z"/><path d="M4058.29 2247.39h13.85v228.36h-13.85Z"/><path d="M4051.37 2339.09h27.70v126.96h-27.70Z"/><path d="M4127.55 2153.93h13.85v186.04h-13.85Z"/><path d="M4120.62 2197.14h27.70v63.48h-27.70Z"/><path d="M4196.80 2286.19h13.85v201.03h-13.85Z"/><path d="M4189.88 2301.18h27.70v107.57h-27.70Z"/><path d="M4266.06 2360.25h13.85v205.44h-13.85Z"/><path d="M4259.14 2438.72h27.70v100.51h-27.70Z"/><path d="M4335.32 2250.92h13.85v245.11h-13.85Z"/><path d="M4328.39 2307.35h27.70v161.35h-27.70Z"/><path d="M4404.57 2190.08h13.85v159.59h-13.85Z"/><path d="M4397.65 2226.23h27.70v50.26h-27.70Z"/></g>
<polyline points="256.10,2374.36 325.36,2423.73 394.61,2542.76 463.87,2475.75 533.13,2296.77 602.38,2382.29 671.64,2544.53 740.90,2509.26 810.15,2295.01 879.41,2324.10 948.67,2557.75 1017.92,2486.33 1087.18,2224.47 1156.44,2304.70 1225.69,2489.86 1294.95,2324.10 1364.21,2251.80 1433.46,2343.50 1502.72,2549.82 1571.98,2464.29 1641.23,2284.42 1710.49,2359.37 1779.75,2525.13 1849.00,2468.70 1918.26,2286.19 1987.52,2349.67 2056.77,2459.00 2126.03,2444.89 2195.29,2235.05 2264.54,2232.40 2333.80,2464.29 2403.06,2435.20 2472.31,2259.74 2541.57,2214.77 2610.83,2480.16 2680.08,2444.89 2749.34,2320.57 2818.60,2233.29 2887.85,2460.76 2957.11,2347.91 3026.37,2267.67 3095.62,2332.04 3164.88,2488.10 3234.14,2444.89 3303.39,2300.30 3372.65,2288.83 3441.91,2456.36 3511.16,2416.68 3580.42,2217.42 3649.68,2387.58 3718.93,2448.42 3788.19,2400.81 3857.45,2075.46 3926.70,2429.91 3995.96,2429.02 4065.22,2405.22 4134.47,2381.41 4203.73,2487.22 4272.99,2454.59 4342.24,2445.78 4411.50,2265.03" fill="none" stroke="#ff0000" stroke-width="6.67" stroke-linejoin="round" stroke-linecap="square"/>
<polyline points="256.10,2374.36 325.36,2419.32 394.61,2540.12 463.87,2468.70 533.13,2291.48 602.38,2382.29 671.64,2536.59 740.90,2503.09 810.15,2291.48 879.41,2351.43 948.67,2534.83 1017.92,2406.10 1087.18,2251.80 1156.44,2308.23 1225.69,2472.23 1294.95,2292.36 1364.21,2240.34 1433.46,2375.24 1502.72,2544.53 1571.98,2454.59 1641.23,2298.53 1710.49,2382.29 1779.75,2496.03 1849.00,2449.30 1918.26,2347.91 1987.52,2360.25 2056.77,2517.19 2126.03,2451.07 2195.29,2279.13 2264.54,2328.51 2333.80,2526.89 2403.06,2454.59 2472.31,2281.78 2541.57,2295.01 2610.83,2523.37 2680.08,2440.49 2749.34,2275.61 2818.60,2293.24 2887.85,2511.02 2957.11,2406.10 3026.37,2256.21 3095.62,2291.48 3164.88,2491.62 3234.14,2367.30 3303.39,2257.97 3372.65,2316.17 3441.91,2452.83 3511.16,2347.91 3580.42,2232.40 3649.68,2305.59 3718.93,2460.76 3788.19,2368.19 3857.45,2213.89 3926.70,2324.98 3995.96,2478.40 4065.22,2390.23 4134.47,2234.17 4203.73,2359.37 4272.99,2480.16 4342.24,2391.99 4411.50,2257.97" fill="none" stroke="#0000ff" stroke-width="6.67" stroke-linejoin="round" stroke-linecap="square"/>
<path d="M242.25 2374.36H269.95M311.51 2423.73H339.21M380.76 2546.29H408.46M450.02 2470.46H477.72M519.28 2286.19H546.98M588.53 2390.23H616.23M657.79 2540.12H685.49M727.05 2503.97H754.75M796.30 2288.83H824.00M865.56 2352.32H893.26M934.82 2540.12H962.52M1004.07 2396.40H1031.77M1073.33 2249.16H1101.03M1142.59 2312.64H1170.29M1211.84 2470.46H1239.54M1281.10 2281.78H1308.80M1350.36 2242.10H1378.06M1419.61 2366.42H1447.31M1488.87 2548.05H1516.57M1558.13 2459.88H1585.83M1627.38 2287.95H1655.08M1696.64 2382.29H1724.34M1765.90 2499.56H1793.60M1835.15 2449.30H1862.85M1904.41 2339.09H1932.11M1973.67 2351.43H2001.37M2042.92 2522.48H2070.62M2112.18 2454.59H2139.88M2181.44 2265.91H2209.14M2250.69 2323.22H2278.39M2319.95 2531.30H2347.65M2389.21 2451.95H2416.91M2458.46 2275.61H2486.16M2527.72 2274.73H2555.42M2596.98 2540.12H2624.68M2666.23 2456.36H2693.93M2735.49 2275.61H2763.19M2804.75 2295.01H2832.45M2874.00 2517.19H2901.70M2943.26 2412.27H2970.96M3012.52 2250.04H3040.22M3081.77 2281.78H3109.47M3151.03 2503.09H3178.73M3220.29 2380.53H3247.99M3289.54 2262.38H3317.24M3358.80 2293.24H3386.50M3428.06 2461.65H3455.76M3497.31 2351.43H3525.01M3566.57 2238.58H3594.27M3635.83 2294.12H3663.53M3705.08 2467.82H3732.78M3774.34 2400.81H3802.04M3843.60 2210.36H3871.30M3912.85 2319.69H3940.55M3982.11 2481.04H4009.81M4051.37 2421.97H4079.07M4120.62 2226.23H4148.32M4189.88 2347.91H4217.58M4259.14 2489.86H4286.84M4328.39 2435.20H4356.09M4397.65 2241.22H4425.35" stroke="#000" stroke-width="4.0" fill="none"/>
<rect x="221.70" y="2048.30" width="4223.90" height="623.00" fill="none" stroke="#000" stroke-width="6.67" stroke-linejoin="miter"/>
<path d="M221.70 2603.60H196.20M221.70 2427.26H196.20M221.70 2250.92H196.20M221.70 2074.58H196.20M256.10 2671.30V2696.80M533.13 2671.30V2696.80M810.15 2671.30V2696.80M1087.18 2671.30V2696.80M1364.21 2671.30V2696.80M1641.23 2671.30V2696.80M1918.26 2671.30V2696.80M2195.29 2671.30V2696.80M2472.31 2671.30V2696.80M2749.34 2671.30V2696.80M3026.37 2671.30V2696.80M3303.39 2671.30V2696.80M3580.42 2671.30V2696.80M3857.45 2671.30V2696.80M4134.47 2671.30V2696.80M4411.50 2671.30V2696.80" stroke="#000" stroke-width="6.67" fill="none"/>
<text x="171.0" y="2626.6" font-size="61.83" text-anchor="end" textLength="37.1" lengthAdjust="spacingAndGlyphs">2</text>
<text x="171.0" y="2450.3" font-size="61.83" text-anchor="end" textLength="37.1" lengthAdjust="spacingAndGlyphs">4</text>
<text x="171.0" y="2273.9" font-size="61.83" text-anchor="end" textLength="37.1" lengthAdjust="spacingAndGlyphs">6</text>
<text x="171.0" y="2097.6" font-size="61.83" text-anchor="end" textLength="37.1" lengthAdjust="spacingAndGlyphs">8</text>
<text x="220.4" y="2022.7" font-size="70.67" textLength="746.0" lengthAdjust="spacingAndGlyphs">10m wind speed (m/s)</text>
<path d="M256.10 3439.80V2816.80M533.13 3439.80V2816.80M810.15 3439.80V2816.80M1087.18 3439.80V2816.80M1364.21 3439.80V2816.80M1641.23 3439.80V2816.80M1918.26 3439.80V2816.80M2195.29 3439.80V2816.80M2472.31 3439.80V2816.80M2749.34 3439.80V2816.80M3026.37 3439.80V2816.80M3303.39 3439.80V2816.80M3580.42 3439.80V2816.80M3857.45 3439.80V2816.80M4134.47 3439.80V2816.80M4411.50 3439.80V2816.80M221.70 3217.40H4445.60M221.70 2995.80H4445.60" stroke="#d0d0d0" stroke-width="4.17" stroke-dasharray="15.4 6.67" fill="none"/>
<path d="M325.36 3329.97V3301.61M394.61 3411.52V3371.63M463.87 2967.88V2950.15M533.13 3166.43V3125.66M602.38 3286.98V3264.38M671.64 3357.01V3302.49M740.90 2958.13V2916.91M810.15 3138.51V3059.18M879.41 3277.23V3263.94M948.67 3305.60V3277.23M1017.92 2953.25V2922.23M1087.18 3159.78V3099.95M1156.44 3294.96V3260.83M1225.69 3316.23V3275.46M1294.95 2989.15V2919.13M1364.21 3181.94V3109.70M1433.46 3296.29V3243.55M1502.72 3319.34V3269.70M1571.98 2933.75V2873.03M1641.23 3085.77V2992.25M1710.49 3247.98V3219.17M1779.75 3357.01V3251.97M1849.00 2910.71V2874.36M1918.26 3043.67V2965.22M1987.52 3247.98V3199.67M2056.77 3329.97V3237.79M2126.03 2898.74V2868.60M2195.29 3094.19V2958.13M2264.54 3235.57V3206.32M2333.80 3298.95V3242.22M2403.06 2955.03V2877.02M2472.31 3119.45V2965.66M2541.57 3247.98V3199.67M2610.83 3301.61V3239.12M2680.08 2961.23V2862.40M2749.34 3135.41V2975.41M2818.60 3257.29V3201.44M2887.85 3308.70V3249.31M2957.11 2962.12V2872.15M3026.37 3158.45V2971.87M3095.62 3270.58V3207.21M3164.88 3296.73V3228.48M3234.14 3096.41V2864.61M3303.39 3185.93V2965.66M3372.65 3270.58V3189.92M3441.91 3292.30V3220.95M3511.16 3014.41V2854.86M3580.42 3176.18V2925.77M3649.68 3250.64V3163.33M3718.93 3276.79V3219.62M3788.19 2991.37V2850.87M3857.45 3165.55V2970.54M3926.70 3256.40V3172.19M3995.96 3265.71V3211.64M4065.22 3002.45V2856.64M4134.47 3297.18V2952.81M4203.73 3347.70V3128.76M4272.99 3334.85V3206.76M4342.24 3032.59V2842.45M4411.50 3210.75V2888.99" stroke="#000" stroke-width="4.0" fill="none"/>
<g fill="#99ff66" stroke="#000" stroke-width="4.0" stroke-linejoin="miter"><path d="M249.17 3246.21h13.85" stroke-linecap="square"/><path d="M242.25 3246.21h27.70" stroke-linecap="square"/><path d="M318.43 3309.14h13.85v12.41h-13.85Z"/><path d="M311.51 3310.47h27.70v8.86h-27.70Z"/><path d="M387.69 3381.83h13.85v14.18h-13.85Z"/><path d="M380.76 3383.16h27.70v10.19h-27.70Z"/><path d="M456.94 2954.14h13.85v12.41h-13.85Z"/><path d="M450.02 2955.91h27.70v9.31h-27.70Z"/><path d="M526.20 3138.95h13.85v23.49h-13.85Z"/><path d="M519.28 3145.60h27.70v12.41h-27.70Z"/><path d="M595.46 3269.70h13.85v11.97h-13.85Z"/><path d="M588.53 3270.58h27.70v9.75h-27.70Z"/><path d="M664.71 3310.47h13.85v32.35h-13.85Z"/><path d="M657.79 3316.23h27.70v19.50h-27.70Z"/><path d="M733.97 2928.88h13.85v17.28h-13.85Z"/><path d="M727.05 2933.75h27.70v10.64h-27.70Z"/><path d="M803.23 3064.94h13.85v50.08h-13.85Z"/><path d="M796.30 3074.69h27.70v30.14h-27.70Z"/><path d="M872.48 3265.71h13.85v8.42h-13.85Z"/><path d="M865.56 3267.48h27.70v3.99h-27.70Z"/><path d="M941.74 3279.45h13.85v13.30h-13.85Z"/><path d="M934.82 3281.22h27.70v9.75h-27.70Z"/><path d="M1011.00 2936.41h13.85v12.85h-13.85Z"/><path d="M1004.07 2937.74h27.70v10.64h-27.70Z"/><path d="M1080.25 3121.67h13.85v26.59h-13.85Z"/><path d="M1073.33 3125.66h27.70v17.28h-27.70Z"/><path d="M1149.51 3271.47h13.85v14.63h-13.85Z"/><path d="M1142.59 3272.80h27.70v10.64h-27.70Z"/><path d="M1218.77 3285.21h13.85v19.50h-13.85Z"/><path d="M1211.84 3286.10h27.70v13.74h-27.70Z"/><path d="M1288.02 2933.75h13.85v41.66h-13.85Z"/><path d="M1281.10 2944.39h27.70v24.38h-27.70Z"/><path d="M1357.28 3140.28h13.85v35.01h-13.85Z"/><path d="M1350.36 3146.93h27.70v20.83h-27.70Z"/><path d="M1426.54 3251.97h13.85v31.47h-13.85Z"/><path d="M1419.61 3255.96h27.70v23.49h-27.70Z"/><path d="M1495.79 3279.45h13.85v27.04h-13.85Z"/><path d="M1488.87 3281.22h27.70v9.75h-27.70Z"/><path d="M1565.05 2876.14h13.85v31.02h-13.85Z"/><path d="M1558.13 2879.24h27.70v17.28h-27.70Z"/><path d="M1634.31 3002.89h13.85v74.01h-13.85Z"/><path d="M1627.38 3013.53h27.70v40.77h-27.70Z"/><path d="M1703.56 3220.50h13.85v14.63h-13.85Z"/><path d="M1696.64 3222.72h27.70v9.75h-27.70Z"/><path d="M1772.82 3265.71h13.85v40.77h-13.85Z"/><path d="M1765.90 3275.46h27.70v23.49h-27.70Z"/><path d="M1842.08 2881.45h13.85v14.18h-13.85Z"/><path d="M1835.15 2883.23h27.70v10.64h-27.70Z"/><path d="M1911.33 2973.64h13.85v62.49h-13.85Z"/><path d="M1904.41 2981.17h27.70v37.23h-27.70Z"/><path d="M1980.59 3208.09h13.85v30.14h-13.85Z"/><path d="M1973.67 3215.18h27.70v11.52h-27.70Z"/><path d="M2049.85 3251.97h13.85v40.77h-13.85Z"/><path d="M2042.92 3255.96h27.70v19.50h-27.70Z"/><path d="M2119.10 2881.01h13.85v10.19h-13.85Z"/><path d="M2112.18 2883.23h27.70v6.65h-27.70Z"/><path d="M2188.36 2993.14h13.85v68.25h-13.85Z"/><path d="M2181.44 2997.57h27.70v47.42h-27.70Z"/><path d="M2257.62 3211.20h13.85v21.27h-13.85Z"/><path d="M2250.69 3219.17h27.70v10.64h-27.70Z"/><path d="M2326.87 3246.21h13.85v29.25h-13.85Z"/><path d="M2319.95 3247.09h27.70v22.60h-27.70Z"/><path d="M2396.13 2893.86h13.85v17.73h-13.85Z"/><path d="M2389.21 2896.52h27.70v12.85h-27.70Z"/><path d="M2465.39 3004.66h13.85v85.09h-13.85Z"/><path d="M2458.46 3009.98h27.70v54.51h-27.70Z"/><path d="M2534.64 3211.20h13.85v30.14h-13.85Z"/><path d="M2527.72 3216.96h27.70v11.52h-27.70Z"/><path d="M2603.90 3246.21h13.85v39.00h-13.85Z"/><path d="M2596.98 3249.31h27.70v16.40h-27.70Z"/><path d="M2673.16 2883.23h13.85v35.01h-13.85Z"/><path d="M2666.23 2894.75h27.70v21.27h-27.70Z"/><path d="M2742.41 3003.78h13.85v100.16h-13.85Z"/><path d="M2735.49 3028.15h27.70v66.04h-27.70Z"/><path d="M2811.67 3212.97h13.85v35.01h-13.85Z"/><path d="M2804.75 3225.82h27.70v14.63h-27.70Z"/><path d="M2880.93 3249.31h13.85v31.02h-13.85Z"/><path d="M2874.00 3250.20h27.70v19.50h-27.70Z"/><path d="M2950.18 2885.00h13.85v66.04h-13.85Z"/><path d="M2943.26 2893.86h27.70v40.77h-27.70Z"/><path d="M3019.44 3002.00h13.85v132.07h-13.85Z"/><path d="M3012.52 3055.19h27.70v64.26h-27.70Z"/><path d="M3088.70 3219.17h13.85v38.12h-13.85Z"/><path d="M3081.77 3226.71h27.70v22.60h-27.70Z"/><path d="M3157.95 3246.21h13.85v37.23h-13.85Z"/><path d="M3151.03 3250.20h27.70v23.49h-27.70Z"/><path d="M3227.21 2881.01h13.85v109.03h-13.85Z"/><path d="M3220.29 2901.40h27.70v56.73h-27.70Z"/><path d="M3296.47 3006.88h13.85v145.81h-13.85Z"/><path d="M3289.54 3046.77h27.70v87.75h-27.70Z"/><path d="M3365.72 3206.32h13.85v51.41h-13.85Z"/><path d="M3358.80 3216.96h27.70v28.36h-27.70Z"/><path d="M3434.98 3232.47h13.85v39.00h-13.85Z"/><path d="M3428.06 3241.33h27.70v16.40h-27.70Z"/><path d="M3504.24 2881.90h13.85v105.48h-13.85Z"/><path d="M3497.31 2892.53h27.70v71.36h-27.70Z"/><path d="M3573.49 2988.27h13.85v165.31h-13.85Z"/><path d="M3566.57 3047.65h27.70v94.84h-27.70Z"/><path d="M3642.75 3195.68h13.85v51.85h-13.85Z"/><path d="M3635.83 3211.64h27.70v23.93h-27.70Z"/><path d="M3712.01 3228.04h13.85v34.57h-13.85Z"/><path d="M3705.08 3240.00h27.70v12.85h-27.70Z"/><path d="M3781.26 2871.70h13.85v102.38h-13.85Z"/><path d="M3774.34 2882.78h27.70v79.33h-27.70Z"/><path d="M3850.52 2998.90h13.85v162.21h-13.85Z"/><path d="M3843.60 3027.27h27.70v99.28h-27.70Z"/><path d="M3919.78 3187.26h13.85v45.21h-13.85Z"/><path d="M3912.85 3197.90h27.70v28.81h-27.70Z"/><path d="M3989.03 3219.62h13.85v44.76h-13.85Z"/><path d="M3982.11 3230.25h27.70v19.50h-27.70Z"/><path d="M4058.29 2878.35h13.85v85.09h-13.85Z"/><path d="M4051.37 2881.45h27.70v72.24h-27.70Z"/><path d="M4127.55 2987.38h13.85v159.55h-13.85Z"/><path d="M4120.62 3032.59h27.70v88.64h-27.70Z"/><path d="M4196.80 3157.12h13.85v82.88h-13.85Z"/><path d="M4189.88 3189.48h27.70v34.57h-27.70Z"/><path d="M4266.06 3219.62h13.85v42.99h-13.85Z"/><path d="M4259.14 3225.82h27.70v24.82h-27.70Z"/><path d="M4335.32 2858.85h13.85v102.38h-13.85Z"/><path d="M4328.39 2883.67h27.70v61.60h-27.70Z"/><path d="M4404.57 2974.08h13.85v163.10h-13.85Z"/><path d="M4397.65 3010.87h27.70v103.71h-27.70Z"/></g>
<polyline points="256.10,3246.21 325.36,3314.46 394.61,3384.49 463.87,2959.90 533.13,3149.59 602.38,3273.69 671.64,3312.24 740.90,2941.73 810.15,3087.10 879.41,3263.94 948.67,3279.45 1017.92,2938.63 1087.18,3131.42 1156.44,3278.56 1225.69,3290.97 1294.95,2934.64 1364.21,3152.69 1433.46,3263.94 1502.72,3283.44 1571.98,2880.12 1641.23,3022.39 1710.49,3224.93 1779.75,3277.23 1849.00,2895.64 1918.26,3036.13 1987.52,3228.48 2056.77,3292.74 2126.03,2903.61 2195.29,3039.68 2264.54,3228.48 2333.80,3242.22 2403.06,2915.14 2472.31,3090.64 2541.57,3222.72 2610.83,3261.72 2680.08,2923.12 2749.34,3033.92 2818.60,3234.68 2887.85,3245.32 2957.11,2914.25 3026.37,3109.70 3095.62,3220.95 3164.88,3286.98 3234.14,2926.66 3303.39,3022.39 3372.65,3211.20 3441.91,3281.22 3511.16,2916.91 3580.42,3038.79 3649.68,3203.22 3718.93,3299.39 3788.19,2889.88 3857.45,3052.09 3926.70,3166.43 3995.96,3275.90 4065.22,2892.09 4134.47,2943.06 4203.73,3179.28 4272.99,3274.57 4342.24,2882.78 4411.50,3043.22" fill="none" stroke="#ff0000" stroke-width="6.67" stroke-linejoin="round" stroke-linecap="square"/>
<polyline points="256.10,3246.21 325.36,3315.35 394.61,3384.49 463.87,2962.12 533.13,3151.36 602.38,3275.46 671.64,3320.22 740.90,2942.62 810.15,3087.10 879.41,3265.71 948.67,3283.44 1017.92,2946.16 1087.18,3135.41 1156.44,3277.23 1225.69,3290.97 1294.95,2963.89 1364.21,3158.45 1433.46,3267.48 1502.72,3286.98 1571.98,2889.88 1641.23,3029.93 1710.49,3226.71 1779.75,3286.10 1849.00,2889.88 1918.26,2997.13 1987.52,3220.95 2056.77,3261.72 2126.03,2889.88 2195.29,3010.43 2264.54,3222.72 2333.80,3255.96 2403.06,2903.61 2472.31,3039.68 2541.57,3222.72 2610.83,3254.19 2680.08,2909.38 2749.34,3055.19 2818.60,3233.80 2887.85,3260.83 2957.11,2913.36 3026.37,3106.16 3095.62,3238.23 3164.88,3261.72 3234.14,2930.65 3303.39,3098.18 3372.65,3231.58 3441.91,3249.31 3511.16,2933.75 3580.42,3092.86 3649.68,3222.72 3718.93,3242.22 3788.19,2920.01 3857.45,3080.01 3926.70,3210.75 3995.96,3240.00 4065.22,2911.59 4134.47,3075.58 4203.73,3206.76 4272.99,3240.00 4342.24,2911.59 4411.50,3059.62" fill="none" stroke="#0000ff" stroke-width="6.67" stroke-linejoin="round" stroke-linecap="square"/>
<path d="M242.25 3246.21H269.95M311.51 3315.35H339.21M380.76 3388.48H408.46M450.02 2959.90H477.72M519.28 3151.36H546.98M588.53 3273.69H616.23M657.79 3328.20H685.49M727.05 2937.74H754.75M796.30 3091.09H824.00M865.56 3268.37H893.26M934.82 3286.98H962.52M1004.07 2942.62H1031.77M1073.33 3138.95H1101.03M1142.59 3277.23H1170.29M1211.84 3292.74H1239.54M1281.10 2958.13H1308.80M1350.36 3156.68H1378.06M1419.61 3269.70H1447.31M1488.87 3286.98H1516.57M1558.13 2885.89H1585.83M1627.38 3032.59H1655.08M1696.64 3226.71H1724.34M1765.90 3294.96H1793.60M1835.15 2888.10H1862.85M1904.41 3008.65H1932.11M1973.67 3218.29H2001.37M2042.92 3263.94H2070.62M2112.18 2885.89H2139.88M2181.44 3019.29H2209.14M2250.69 3222.72H2278.39M2319.95 3255.96H2347.65M2389.21 2901.40H2416.91M2458.46 3029.93H2486.16M2527.72 3222.28H2555.42M2596.98 3254.19H2624.68M2666.23 2900.51H2693.93M2735.49 3061.84H2763.19M2804.75 3232.47H2832.45M2874.00 3263.94H2901.70M2943.26 2905.39H2970.96M3012.52 3103.94H3040.22M3081.77 3238.23H3109.47M3151.03 3257.29H3178.73M3220.29 2923.12H3247.99M3289.54 3094.19H3317.24M3358.80 3232.47H3386.50M3428.06 3247.98H3455.76M3497.31 2937.74H3525.01M3566.57 3110.15H3594.27M3635.83 3224.05H3663.53M3705.08 3240.00H3732.78M3774.34 2911.59H3802.04M3843.60 3079.12H3871.30M3912.85 3219.62H3940.55M3982.11 3235.57H4009.81M4051.37 2900.96H4079.07M4120.62 3067.16H4148.32M4189.88 3209.42H4217.58M4259.14 3235.57H4286.84M4328.39 2904.06H4356.09M4397.65 3072.47H4425.35" stroke="#000" stroke-width="4.0" fill="none"/>
<rect x="221.70" y="2816.80" width="4223.90" height="623.00" fill="none" stroke="#000" stroke-width="6.67" stroke-linejoin="miter"/>
<path d="M221.70 3217.40H196.20M221.70 2995.80H196.20M256.10 3439.80V3465.30M533.13 3439.80V3465.30M810.15 3439.80V3465.30M1087.18 3439.80V3465.30M1364.21 3439.80V3465.30M1641.23 3439.80V3465.30M1918.26 3439.80V3465.30M2195.29 3439.80V3465.30M2472.31 3439.80V3465.30M2749.34 3439.80V3465.30M3026.37 3439.80V3465.30M3303.39 3439.80V3465.30M3580.42 3439.80V3465.30M3857.45 3439.80V3465.30M4134.47 3439.80V3465.30M4411.50 3439.80V3465.30" stroke="#000" stroke-width="6.67" fill="none"/>
<text x="171.0" y="3240.4" font-size="61.83" text-anchor="end" textLength="74.3" lengthAdjust="spacingAndGlyphs">30</text>
<text x="171.0" y="3018.8" font-size="61.83" text-anchor="end" textLength="74.3" lengthAdjust="spacingAndGlyphs">35</text>
<text x="220.4" y="2791.2" font-size="70.67" textLength="700.2" lengthAdjust="spacingAndGlyphs">2m temperature (°C)</text>
<text x="256.1" y="3533.9" font-size="61.83" text-anchor="middle" textLength="114.3" lengthAdjust="spacingAndGlyphs">12Z</text>
<text x="256.1" y="3600.5" font-size="61.83" text-anchor="middle" textLength="175.3" lengthAdjust="spacingAndGlyphs">05Apr</text>
<text x="533.1" y="3533.9" font-size="61.83" text-anchor="middle" textLength="114.3" lengthAdjust="spacingAndGlyphs">12Z</text>
<text x="533.1" y="3600.5" font-size="61.83" text-anchor="middle" textLength="175.3" lengthAdjust="spacingAndGlyphs">06Apr</text>
<text x="810.2" y="3533.9" font-size="61.83" text-anchor="middle" textLength="114.3" lengthAdjust="spacingAndGlyphs">12Z</text>
<text x="810.2" y="3600.5" font-size="61.83" text-anchor="middle" textLength="175.3" lengthAdjust="spacingAndGlyphs">07Apr</text>
<text x="1087.2" y="3533.9" font-size="61.83" text-anchor="middle" textLength="114.3" lengthAdjust="spacingAndGlyphs">12Z</text>
<text x="1087.2" y="3600.5" font-size="61.83" text-anchor="middle" textLength="175.3" lengthAdjust="spacingAndGlyphs">08Apr</text>
<text x="1364.2" y="3533.9" font-size="61.83" text-anchor="middle" textLength="114.3" lengthAdjust="spacingAndGlyphs">12Z</text>
<text x="1364.2" y="3600.5" font-size="61.83" text-anchor="middle" textLength="175.3" lengthAdjust="spacingAndGlyphs">09Apr</text>
<text x="1641.2" y="3533.9" font-size="61.83" text-anchor="middle" textLength="114.3" lengthAdjust="spacingAndGlyphs">12Z</text>
<text x="1641.2" y="3600.5" font-size="61.83" text-anchor="middle" textLength="175.3" lengthAdjust="spacingAndGlyphs">10Apr</text>
<text x="1918.3" y="3533.9" font-size="61.83" text-anchor="middle" textLength="114.3" lengthAdjust="spacingAndGlyphs">12Z</text>
<text x="1918.3" y="3600.5" font-size="61.83" text-anchor="middle" textLength="175.3" lengthAdjust="spacingAndGlyphs">11Apr</text>
<text x="2195.3" y="3533.9" font-size="61.83" text-anchor="middle" textLength="114.3" lengthAdjust="spacingAndGlyphs">12Z</text>
<text x="2195.3" y="3600.5" font-size="61.83" text-anchor="middle" textLength="175.3" lengthAdjust="spacingAndGlyphs">12Apr</text>
<text x="2472.3" y="3533.9" font-size="61.83" text-anchor="middle" textLength="114.3" lengthAdjust="spacingAndGlyphs">12Z</text>
<text x="2472.3" y="3600.5" font-size="61.83" text-anchor="middle" textLength="175.3" lengthAdjust="spacingAndGlyphs">13Apr</text>
<text x="2749.3" y="3533.9" font-size="61.83" text-anchor="middle" textLength="114.3" lengthAdjust="spacingAndGlyphs">12Z</text>
<text x="2749.3" y="3600.5" font-size="61.83" text-anchor="middle" textLength="175.3" lengthAdjust="spacingAndGlyphs">14Apr</text>
<text x="3026.4" y="3533.9" font-size="61.83" text-anchor="middle" textLength="114.3" lengthAdjust="spacingAndGlyphs">12Z</text>
<text x="3026.4" y="3600.5" font-size="61.83" text-anchor="middle" textLength="175.3" lengthAdjust="spacingAndGlyphs">15Apr</text>
<text x="3303.4" y="3533.9" font-size="61.83" text-anchor="middle" textLength="114.3" lengthAdjust="spacingAndGlyphs">12Z</text>
<text x="3303.4" y="3600.5" font-size="61.83" text-anchor="middle" textLength="175.3" lengthAdjust="spacingAndGlyphs">16Apr</text>
<text x="3580.4" y="3533.9" font-size="61.83" text-anchor="middle" textLength="114.3" lengthAdjust="spacingAndGlyphs">12Z</text>
<text x="3580.4" y="3600.5" font-size="61.83" text-anchor="middle" textLength="175.3" lengthAdjust="spacingAndGlyphs">17Apr</text>
<text x="3857.4" y="3533.9" font-size="61.83" text-anchor="middle" textLength="114.3" lengthAdjust="spacingAndGlyphs">12Z</text>
<text x="3857.4" y="3600.5" font-size="61.83" text-anchor="middle" textLength="175.3" lengthAdjust="spacingAndGlyphs">18Apr</text>
<text x="4134.5" y="3533.9" font-size="61.83" text-anchor="middle" textLength="114.3" lengthAdjust="spacingAndGlyphs">12Z</text>
<text x="4134.5" y="3600.5" font-size="61.83" text-anchor="middle" textLength="175.3" lengthAdjust="spacingAndGlyphs">19Apr</text>
<text x="4411.5" y="3533.9" font-size="61.83" text-anchor="middle" textLength="114.3" lengthAdjust="spacingAndGlyphs">12Z</text>
<text x="4411.5" y="3600.5" font-size="61.83" text-anchor="middle" textLength="175.3" lengthAdjust="spacingAndGlyphs">20Apr</text>
<path d="M2957.5 83.7V458.8" stroke="#000" stroke-width="4.7"/>
<rect x="2934" y="148" width="47" height="248" fill="#99ff66" stroke="#000" stroke-width="4.7"/>
<rect x="2910" y="209.5" width="95" height="124" fill="#99ff66" stroke="#000" stroke-width="4.7"/>
<path d="M2910 271.2H3005" stroke="#000" stroke-width="4.7"/>
<text x="3056.5" y="98.7" font-size="53.00" textLength="108.9" lengthAdjust="spacingAndGlyphs">max</text>
<text x="3056.5" y="160.4" font-size="53.00" textLength="111.1" lengthAdjust="spacingAndGlyphs">90%</text>
<text x="3056.5" y="222.2" font-size="53.00" textLength="111.1" lengthAdjust="spacingAndGlyphs">75%</text>
<text x="3056.5" y="283.9" font-size="53.00" textLength="187.4" lengthAdjust="spacingAndGlyphs">median</text>
<text x="3056.5" y="345.6" font-size="53.00" textLength="111.1" lengthAdjust="spacingAndGlyphs">25%</text>
<text x="3056.5" y="407.3" font-size="53.00" textLength="111.1" lengthAdjust="spacingAndGlyphs">10%</text>
<text x="3056.5" y="469.1" font-size="53.00" textLength="94.3" lengthAdjust="spacingAndGlyphs">min</text>
<path d="M3667 206.4H3807" stroke="#ff0000" stroke-width="6.67"/>
<path d="M3667 339.4H3807" stroke="#0000ff" stroke-width="6.67"/>
<text x="3857.0" y="229.7" font-size="70.67" textLength="240.8" lengthAdjust="spacingAndGlyphs">Control</text>
<text x="3857.0" y="362.6" font-size="70.67" textLength="529.4" lengthAdjust="spacingAndGlyphs">Ensemble Mean</text>
</svg></body></html>
